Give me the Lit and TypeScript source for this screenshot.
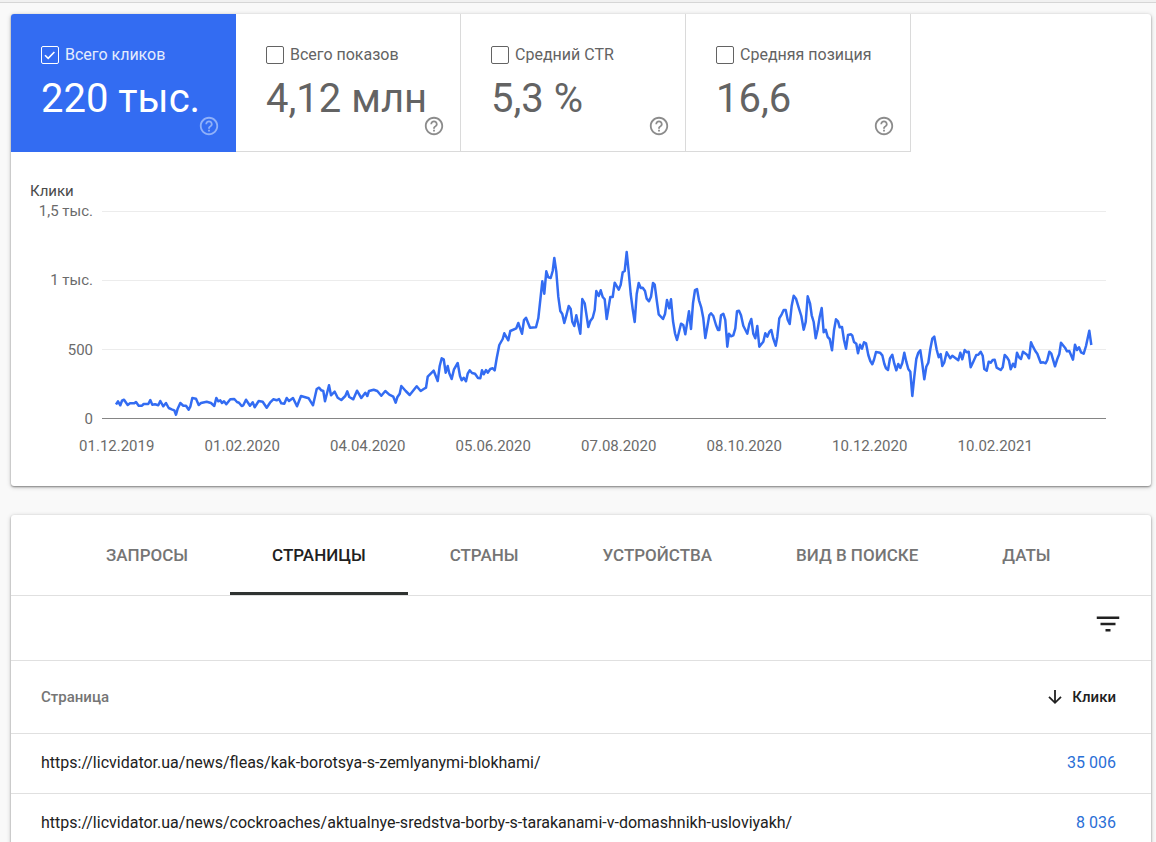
import { LitElement, html, svg, css } from "lit";
import { customElement, property, state } from "lit/decorators.js";
import { classMap } from "lit/directives/class-map.js";

interface Metric {
  id: string;
  label: string;
  value: string;
  selected: boolean;
}

interface PageRow {
  url: string;
  clicks: string;
}

const METRICS: Metric[] = [
  { id: "clicks", label: "Всего кликов", value: "220 тыс.", selected: true },
  { id: "impressions", label: "Всего показов", value: "4,12 млн", selected: false },
  { id: "ctr", label: "Средний CTR", value: "5,3 %", selected: false },
  { id: "position", label: "Средняя позиция", value: "16,6", selected: false },
];

const TABS = ["Запросы", "Страницы", "Страны", "Устройства", "Вид в поиске", "Даты"];

const ROWS: PageRow[] = [
  { url: "https://licvidator.ua/news/fleas/kak-borotsya-s-zemlyanymi-blokhami/", clicks: "35 006" },
  {
    url: "https://licvidator.ua/news/cockroaches/aktualnye-sredstva-borby-s-tarakanami-v-domashnikh-usloviyakh/",
    clicks: "8 036",
  },
];

const Y_LABELS = ["1,5 тыс.", "1 тыс.", "500", "0"];
const X_LABELS = [
  "01.12.2019",
  "01.02.2020",
  "04.04.2020",
  "05.06.2020",
  "07.08.2020",
  "08.10.2020",
  "10.12.2020",
  "10.02.2021",
];

/* Daily clicks as "x,y" pairs in the coordinate space of the plot's viewBox. */
const CLICKS_LINE = `
116,404.5 118,401.3 120.3,405.3 122,400.7 124,399.7 127.7,405 130,403.3 134.3,403.3 136,402 138.7,405.7
142,405.7 143.7,404 148.3,404 150.3,400 152.3,404.7 155,404.3 158.3,405.3 160.3,401 163.3,406.3 166,403
168.7,408 171.7,409.3 174.3,410.3 176,414.7 177.7,408.7 180.3,403 183.3,405.7 186,405.7 188.7,409.7
190.3,406.7 192.3,398 196,398.7 198.7,405 201,403 206.7,401.7 211,403 214.3,406 216.3,398 218.3,401.3
220.3,400.3 222,403 224,401.3 226.3,404.3 230.3,399.3 234.3,399 237,402 239,402.7 241.7,406 243.3,405.3
246,399.7 250,405.7 252.7,402.3 254.7,407.3 258.7,401 262.7,401.7 266.7,407.7 270,402.7 273.3,399.3
276.7,400.3 279,399 281.3,403.3 284.3,403.7 286.7,398 289,401 293,398 297,406.3 301,396 308.7,398.3
313,405.3 316.7,389 319,387.7 321.3,390.3 323.3,391 325,401.3 329,385.3 331,395.3 334.7,391.7 337.7,397.7
341.3,400 345.3,396 347.3,391.3 349.3,397 353.3,399.3 357,390.7 361.3,398 365.3,392.7 367.3,396 369,391
373.7,389.7 377.3,391 381.3,395.7 385.3,391 389.3,394.7 393.3,396.7 395.7,402.7 397.3,397.3 399.7,393.7
401.3,386 405.7,391 409.7,395 416.7,386.3 420.7,391 423.7,389 426,387.7 427.7,376.7 433.7,370.7
437.7,381 439.7,366 441.7,358.3 443.7,359.3 445.7,372.7 447.7,366 449.3,373.3 451.7,379 454,369.3
457.7,363 460,376 461.7,380.3 463.7,377.7 466,381.3 467.7,373.7 469.7,370.3 472,373 475,373.7 478,378
480.3,378.3 482,370.3 483.7,374.3 486,370 487.7,372.7 490.3,369 492.7,368.3 494.7,370.3 496.7,358.3
499.3,345 502.7,339 504.3,333.3 508.3,340.3 510.3,331 516.3,328.3 518.3,323 522,333.7 524,320 526,317.7
530,327.7 536,327.3 538.3,318.3 540.3,300 542.3,281.3 544.3,293.7 546.3,271.3 548.3,277.3 550.7,278
552.7,271 554.3,258 556.3,271.7 558.3,296.7 560.3,311 562.3,314 564.3,323 566.3,315.7 568.7,306
570.7,309 572.3,321.7 574.3,326 576.3,315.3 580.3,333.7 582.3,299 584.7,303.3 588.3,327 590.3,321
592.7,317.7 594.7,310 596.3,291 598.7,296 600.7,290.3 602.7,297 604.7,299.3 606.7,319 610.3,297
612.7,297 614.7,282.7 618.7,289.7 620.7,284.7 622.7,272.3 624.7,271 626.7,252 628.7,272 630.7,294
632.7,309.3 634.7,322 636.7,294 638.7,283 640.7,288 642.7,287.7 645,291 646.7,298.7 649,301.3 651,296.7
653,283 654.7,284.7 656.7,300 658.7,314.3 663,319 665,314 667,300 669.3,308.3 671,299.3 673,321
675,333.3 677,340 679,332 681,323.7 683.3,325 685.3,334.3 689,311.3 691,329 693,303.3 695,290 697,289
699,300.3 701.3,307.7 703.3,318.3 705.3,338 707.3,327 709.3,315.3 711,313.3 713.3,316 716,325 718,330
719.3,330 721,315.3 723.3,313.7 725.3,320 727.3,346.7 729,333.7 731,336.3 733.3,335.3 735.3,328.3
737,311.3 739,310.7 741,315.3 743.3,325.7 747.3,333.7 749.3,324 751.3,319 753.3,333.7 755.3,338.3
757.3,326 759.3,346.7 763.3,341.7 765.3,333.3 767.3,336.7 769.3,332 771.3,330 773.3,338.7 775.7,345.7
777.3,336.7 779.3,318.3 781.7,314.3 783.7,310 785.7,310 787.7,319.7 789.7,324 791.7,305.7 793.7,295.7
796,298.7 798.7,307.7 801.3,316 803.7,329.7 805.7,322 807.7,296.3 810,303.3 811.7,315.3 813.7,322
815.7,338.3 817.7,329.3 819.7,316.7 821.7,308 823.7,332.3 825.7,329.7 827.7,337 829.7,339 832,350.3
834,330.3 836,319.3 838,321.3 839.7,327.3 842,327 844,340 846,348.7 848,335 851,334.3 852.3,335.7
854,342 856.3,343.7 858,353.3 860,344.7 862,348.7 864,342.3 866,343.3 868.3,355 870.3,361 872.3,364.3
874,359.7 876,352 880,352.7 882.3,355.3 884.3,363.7 886,368.3 888,370 890,358.3 892.3,354.7 894.3,363.7
896.3,370.3 898.3,364 900.3,368 902.3,363 904.3,352.7 906.3,361.7 908.3,369 910.3,371.7 912.3,396
914.3,376.7 916.3,359 918.3,352.7 920.3,350.3 922.3,363.7 924.3,379.3 926.3,366.7 928.3,362.7 930.3,349
932.3,338.7 934.3,336.7 936.7,349.7 938.7,357.3 940.7,354 942.3,366 944.3,362.3 946.7,352.3 950.3,358.3
952.3,355.7 958.3,360.3 960.3,352.7 962.3,359.3 964.7,350 966.7,352.3 968.7,351.7 970.7,367.3
973.3,361.7 976.3,355 978.3,354.7 980.7,351.7 982.7,355.7 984.3,369 986.7,370.7 988.7,361.7 990.7,362.7
992.7,360 994.7,359.7 996.7,367.7 1000.7,370 1002.7,367.3 1004.7,355 1007,357.3 1009,360.7 1010.7,369.3
1013,363.7 1015,367 1017,352.7 1019,357.3 1021,359 1023,351.7 1027,354.7 1029,358.3 1031,342.3
1033,346.7 1035.3,351 1037.3,353.7 1040.7,362.7 1043.3,362.3 1045.7,363.3 1047.3,360 1049.3,351.7
1051.3,353.7 1055,366.3 1057.3,359 1059.3,354 1061,342.7 1065,347.7 1067,351.3 1069.3,351 1073,359.7
1075,344.7 1077,350 1079,347.3 1081,352.3 1083.7,353.7 1086,346 1089.3,330.7 1091.3,345`;

@customElement("metric-tile")
export class MetricTile extends LitElement {
  @property({ attribute: false }) metric!: Metric;

  static styles = css`
    :host {
      display: block;
      flex: 0 1 225px;
      min-width: 0;
    }
    .tile {
      box-sizing: border-box;
      height: 100%;
      padding: 31px 15px 14px 30px;
      border-right: 1px solid #dadada;
      border-bottom: 1px solid #dadada;
      color: #636363;
      white-space: nowrap;
    }
    .selected {
      background: #336cf2;
      border-color: #336cf2;
      color: #fff;
    }
    .head {
      display: flex;
      align-items: center;
      gap: 6px;
      height: 20px;
    }
    .box {
      display: grid;
      width: 18px;
      height: 18px;
    }
    .box > * {
      grid-area: 1 / 1;
    }
    .check {
      appearance: none;
      box-sizing: border-box;
      width: 18px;
      height: 18px;
      margin: 0;
      border: 1px solid currentColor;
      border-radius: 2px;
      color: inherit;
    }
    .tick {
      width: 18px;
      height: 18px;
      pointer-events: none;
    }
    .label {
      font-size: 16px;
      line-height: 20px;
    }
    .selected .label {
      color: #e4ecfd;
    }
    .value {
      margin-top: 18px;
      font-size: 40px;
      line-height: 32px;
    }
    .help {
      display: block;
      width: 22px;
      height: 22px;
      margin: 0 0 0 auto;
      padding: 0;
      border: 0;
      background: none;
      color: #8c8c8c;
      cursor: pointer;
    }
    .selected .help {
      color: #8fb0f9;
    }
    .help svg {
      display: block;
      width: 22px;
      height: 22px;
    }
  `;

  private toggle(e: Event) {
    this.metric = { ...this.metric, selected: (e.target as HTMLInputElement).checked };
  }

  render() {
    const m = this.metric;
    return html`
      <div class=${classMap({ tile: true, selected: m.selected })}>
        <div class="head">
          <span class="box">
            <input class="check" type="checkbox" id=${m.id} .checked=${m.selected} @change=${this.toggle} />
            ${m.selected
              ? html`<svg class="tick" viewBox="0 0 18 18" aria-hidden="true">
                  <path d="M4 9.2 7.2 12.4 13.4 6" fill="none" stroke="currentColor" stroke-width="1.6" />
                </svg>`
              : null}
          </span>
          <label class="label" for=${m.id}>${m.label}</label>
        </div>
        <div class="value">${m.value}</div>
        <button class="help" type="button" aria-label="Справка">
          <svg viewBox="0 0 24 24" aria-hidden="true">
            <path
              fill="currentColor"
              d="M11 18h2v-2h-2v2zm1-16C6.48 2 2 6.48 2 12s4.48 10 10 10 10-4.48 10-10S17.52 2 12 2zm0 18c-4.41 0-8-3.59-8-8s3.59-8 8-8 8 3.59 8 8-3.59 8-8 8zm0-14c-2.21 0-4 1.79-4 4h2c0-1.1.9-2 2-2s2 .9 2 2c0 2-3 1.75-3 5h2c0-2.25 3-2.5 3-5 0-2.21-1.79-4-4-4z"
            />
          </svg>
        </button>
      </div>
    `;
  }
}

@customElement("clicks-chart")
export class ClicksChart extends LitElement {
  static styles = css`
    :host {
      display: block;
      padding: 30px 45px 31px 19px;
      font-size: 15px;
      line-height: 18px;
      color: #6b6b6b;
    }
    .title {
      color: #4a4a4a;
    }
    .body {
      display: flex;
      gap: 9px;
      margin-top: 2px;
    }
    .scale {
      display: flex;
      flex: 0 0 63px;
      flex-direction: column;
      justify-content: space-between;
      text-align: right;
    }
    .plot {
      flex: 1;
      min-width: 0;
      height: 208px;
      margin: 9px 0;
      overflow: visible;
    }
    .grid {
      stroke: #ececec;
    }
    .base {
      stroke: #858585;
    }
    .line {
      fill: none;
      stroke: #336cf2;
      stroke-width: 2.5;
      stroke-linejoin: round;
    }
    .dates {
      display: grid;
      grid-template-columns: repeat(8, 1fr);
      margin: 9px 48px 0 24px;
      text-align: center;
    }
  `;

  render() {
    return html`
      <div class="title">Клики</div>
      <div class="body">
        <div class="scale">${Y_LABELS.map((t) => html`<span>${t}</span>`)}</div>
        <svg class="plot" viewBox="102 211 1004 208" preserveAspectRatio="none" role="img" aria-label="Клики">
          ${[211.5, 280.5, 349.5].map(
            (y) => svg`<line class="grid" x1="102" x2="1106" y1=${y} y2=${y} vector-effect="non-scaling-stroke" />`,
          )}
          <line class="base" x1="102" x2="1106" y1="418.5" y2="418.5" vector-effect="non-scaling-stroke" />
          <polyline class="line" points=${CLICKS_LINE} vector-effect="non-scaling-stroke" />
        </svg>
      </div>
      <div class="dates">${X_LABELS.map((t) => html`<span>${t}</span>`)}</div>
    `;
  }
}

@customElement("pages-report")
export class PagesReport extends LitElement {
  @state() private active = 1;

  static styles = css`
    :host {
      display: block;
      color: #212121;
    }
    .tabs {
      display: flex;
      height: 80px;
      padding-left: 53px;
      border-bottom: 1px solid #e0e0e0;
    }
    .tab {
      box-sizing: border-box;
      padding: 3px 42px 0;
      border: 0;
      border-bottom: 3px solid transparent;
      background: none;
      color: #757575;
      font: 500 17px/20px Roboto, sans-serif;
      text-transform: uppercase;
      white-space: nowrap;
      cursor: pointer;
    }
    .active {
      border-bottom-color: #2f3331;
      color: #212121;
    }
    .tools {
      display: flex;
      justify-content: flex-end;
      box-sizing: border-box;
      height: 65px;
      padding: 13px 28px 0 0;
      border-bottom: 1px solid #e0e0e0;
    }
    .filter {
      width: 30px;
      height: 30px;
      padding: 0;
      border: 0;
      background: none;
      color: #212121;
      cursor: pointer;
    }
    .filter svg {
      display: block;
      width: 30px;
      height: 30px;
    }
    .table {
      width: 100%;
      border-collapse: collapse;
    }
    th,
    td {
      box-sizing: border-box;
      height: 60px;
      padding: 0 35px 0 30px;
      border-bottom: 1px solid #e0e0e0;
      text-align: left;
      font-size: 16px;
      line-height: 20px;
      font-weight: 400;
    }
    th {
      height: 72px;
      color: #757575;
      font-size: 15px;
      font-weight: 500;
    }
    .num {
      padding-left: 0;
      text-align: right;
      white-space: nowrap;
    }
    .sort {
      display: inline-flex;
      align-items: center;
      gap: 8px;
      padding: 0;
      border: 0;
      background: none;
      color: #212121;
      font: 500 15px/20px Roboto, sans-serif;
      vertical-align: top;
      cursor: pointer;
    }
    .sort svg {
      width: 18px;
      height: 18px;
    }
    .count {
      color: #2a6fd6;
      text-decoration: none;
    }
  `;

  render() {
    return html`
      <div class="tabs" role="tablist">
        ${TABS.map(
          (t, i) => html`<button
            type="button"
            role="tab"
            aria-selected=${i === this.active ? "true" : "false"}
            class=${classMap({ tab: true, active: i === this.active })}
            @click=${() => (this.active = i)}
          >
            ${t}
          </button>`,
        )}
      </div>
      <div class="tools">
        <button class="filter" type="button" aria-label="Фильтр">
          <svg viewBox="0 0 24 24" aria-hidden="true">
            <path fill="currentColor" d="M10 18h4v-2h-4v2zM3 6v2h18V6H3zm3 7h12v-2H6v2z" />
          </svg>
        </button>
      </div>
      <table class="table">
        <thead>
          <tr>
            <th scope="col">Страница</th>
            <th scope="col" class="num">
              <button class="sort" type="button">
                <svg viewBox="0 0 18 18" aria-hidden="true">
                  <path d="M9 2v12.5M3 8.8l6 6 6-6" fill="none" stroke="currentColor" stroke-width="1.8" />
                </svg>
                Клики
              </button>
            </th>
          </tr>
        </thead>
        <tbody>
          ${ROWS.map(
            (r) => html`<tr>
              <td>${r.url}</td>
              <td class="num"><a class="count" href="#">${r.clicks}</a></td>
            </tr>`,
          )}
        </tbody>
      </table>
    `;
  }
}

@customElement("app-root")
export class AppRoot extends LitElement {
  static styles = css`
    :host {
      display: block;
      height: 100vh;
      overflow: hidden;
      background: #f9f9f9;
      font-family: Roboto, sans-serif;
    }
    .bar {
      height: 2px;
      background: #f1f1f1;
      border-bottom: 1px solid #d6d6d6;
    }
    .content {
      display: flex;
      flex-direction: column;
      gap: 29px;
      padding: 11px 5px 0 11px;
    }
    .card {
      overflow: hidden;
      border-radius: 3px;
      background: #fff;
      box-shadow:
        0 1px 2px rgba(0, 0, 0, 0.4),
        0 1px 5px rgba(0, 0, 0, 0.2);
    }
    .metrics {
      display: flex;
    }
  `;

  render() {
    return html`
      <div class="bar"></div>
      <main class="content">
        <section class="card">
          <div class="metrics">${METRICS.map((m) => html`<metric-tile .metric=${m}></metric-tile>`)}</div>
          <clicks-chart></clicks-chart>
        </section>
        <section class="card">
          <pages-report></pages-report>
        </section>
      </main>
    `;
  }
}
